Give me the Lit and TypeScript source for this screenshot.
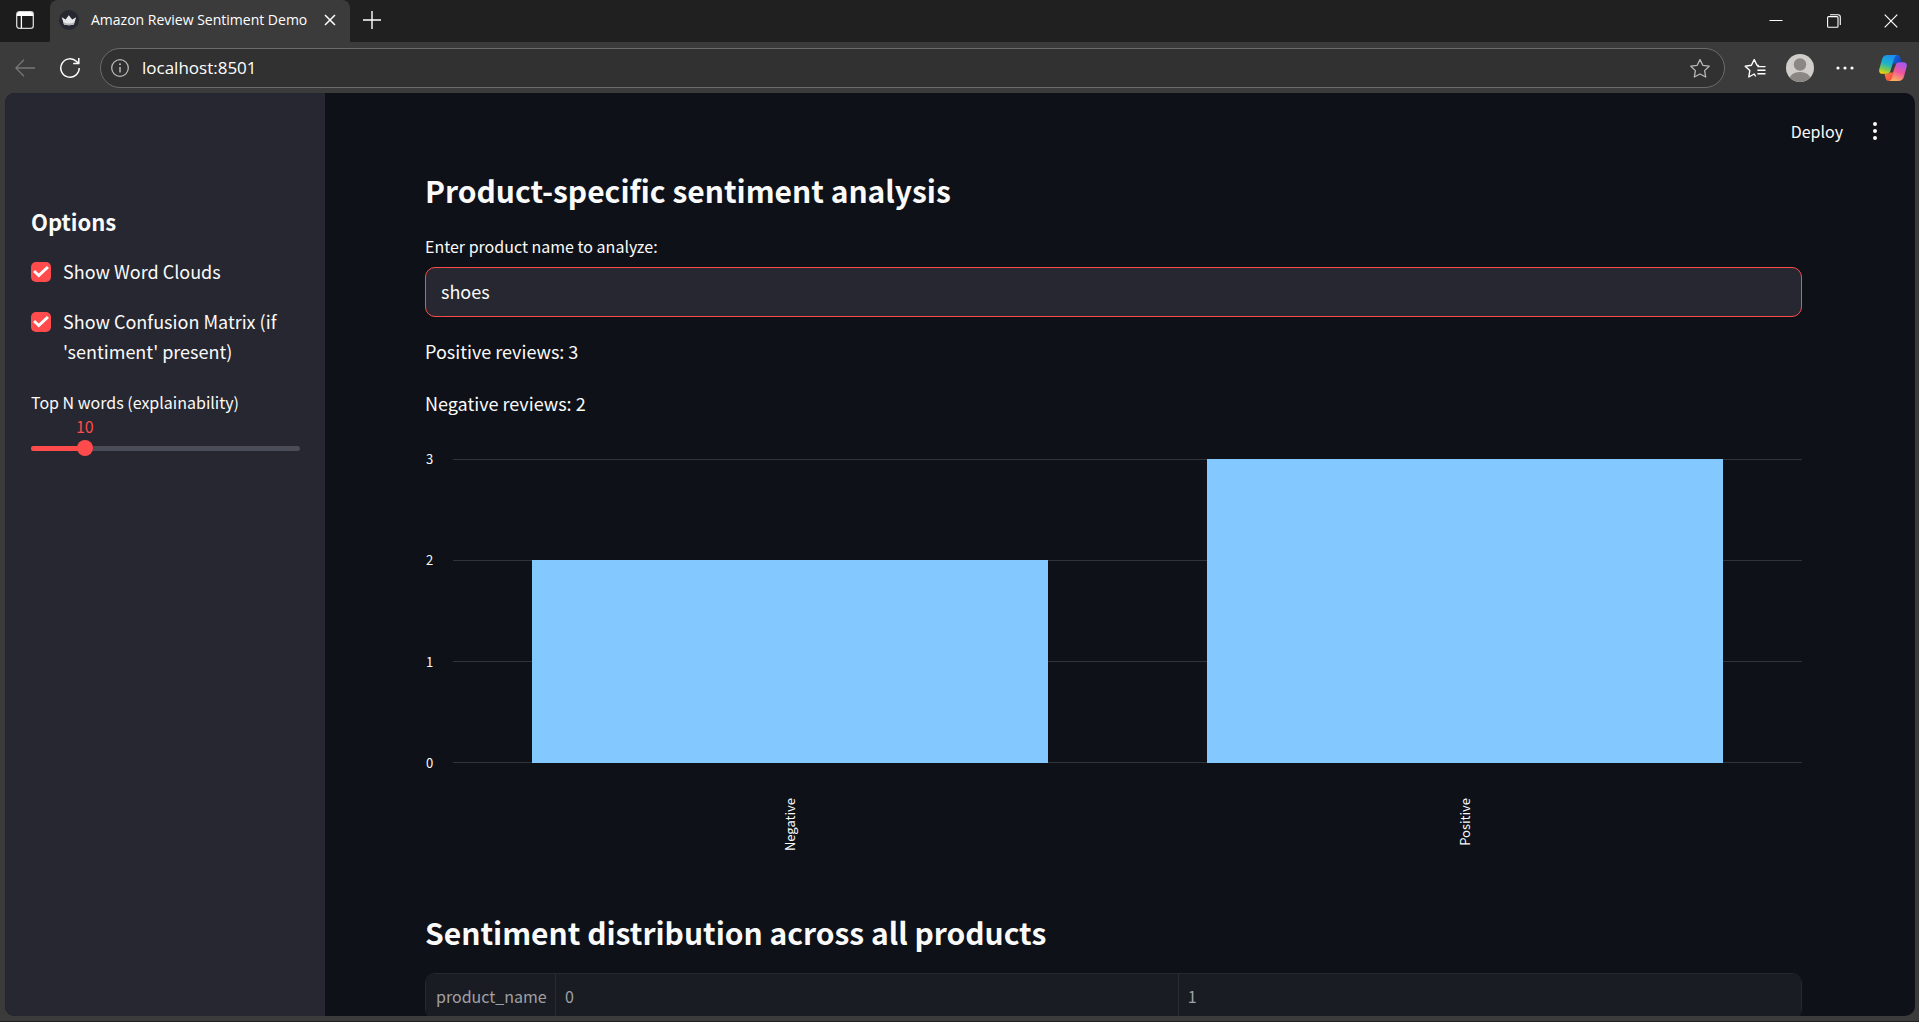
import { LitElement, html, css, svg } from "lit";
import { customElement, property, state } from "lit/decorators.js";

@customElement("browser-bar")
export class BrowserBar extends LitElement {
  @property() title = "Amazon Review Sentiment Demo";
  @property() address = "localhost:8501";

  static styles = css`
    :host {
      display: block;
      font-family: "Open Sans", "Noto Sans", sans-serif;
      color: #fff;
    }
    button {
      display: flex;
      align-items: center;
      justify-content: center;
      padding: 0;
      border: 0;
      background: none;
      color: inherit;
      flex: none;
    }
    svg {
      display: block;
      fill: none;
      stroke: currentColor;
      flex: none;
    }
    .titlebar {
      display: flex;
      align-items: flex-start;
      height: 42px;
      background: #202020;
    }
    .panel {
      width: 50px;
      height: 42px;
      padding-bottom: 2px;
      border-bottom-right-radius: 6px;
      background: #1c1c1c;
    }
    .tabwrap {
      display: flex;
      background: #3b3b3b;
      border-radius: 8px 8px 0 0;
    }
    .tab {
      box-sizing: border-box;
      display: flex;
      align-items: center;
      width: 300px;
      height: 42px;
      padding: 0 10px 2px 9px;
      gap: 12px;
    }
    .tabtitle {
      flex: 1;
      font-size: 14px;
      line-height: 20px;
      white-space: nowrap;
    }
    .tabclose {
      width: 20px;
      height: 20px;
    }
    .plus {
      width: 43px;
      height: 40px;
    }
    .spacer {
      flex: 1;
    }
    .win {
      width: 58px;
      height: 42px;
    }
    .win:last-child {
      width: 56px;
    }
    .toolbar {
      display: flex;
      align-items: center;
      padding: 6px 1px 5px 2px;
      background: #3b3b3b;
    }
    .tool {
      width: 45px;
      height: 40px;
    }
    .back {
      color: #777;
    }
    .address {
      box-sizing: border-box;
      display: flex;
      align-items: center;
      flex: 1;
      height: 40px;
      margin: 0 7px 0 8px;
      padding: 0 13px 0 9px;
      gap: 12px;
      border: 1px solid #6c6c6c;
      border-radius: 20px;
      background: #313131;
      color: #b8b8b8;
    }
    .url {
      flex: 1;
      min-width: 0;
      padding: 0;
      border: 0;
      outline: 0;
      background: none;
      color: #fff;
      font: 17px/24px "Open Sans", "Noto Sans", sans-serif;
    }
    .star {
      width: 22px;
      height: 30px;
    }
    .copilot {
      width: 51px;
      height: 40px;
    }
  `;

  render() {
    return html`
      <div class="titlebar">
        <button class="panel" aria-label="Tab actions">
          <svg width="18" height="18" viewBox="0 0 18 18">
            <rect x="0.7" y="0.7" width="16.6" height="16.6" rx="2.6" stroke-width="1.3" stroke="#d8d8d8" />
            <path d="M1 3.2Q1 1 3.2 1H14.8Q17 1 17 3.2V5H1Z" fill="#fff" stroke="none" />
            <path d="M5.4 5V17" stroke-width="1.3" />
          </svg>
        </button>
        <div class="tabwrap">
          <div class="tab">
            <svg width="20" height="20" viewBox="0 0 20 20">
              <circle cx="10" cy="10" r="10" fill="#262730" stroke="none" />
              <path d="M2.8 7.2 6.6 9.4 9.8 5.2 13.2 9.4 17.2 7.2 14.8 14.4Q9.8 16 5 14.4Z" fill="#e8e8ea" stroke="none" />
              <path d="M4.4 12.2Q10 14.6 15.6 12.2L14.8 14.4Q9.8 16 5 14.4Z" fill="#b5b5ba" stroke="none" />
            </svg>
            <span class="tabtitle">${this.title}</span>
            <button class="tabclose" aria-label="Close tab">
              <svg width="12" height="12" viewBox="0 0 12 12"><path d="M1 1 11 11M11 1 1 11" stroke-width="1.5" /></svg>
            </button>
          </div>
        </div>
        <button class="plus" aria-label="New tab">
          <svg width="18" height="18" viewBox="0 0 18 18"><path d="M9 0V18M0 9H18" stroke-width="1.4" /></svg>
        </button>
        <div class="spacer"></div>
        <button class="win" aria-label="Minimize">
          <svg width="14" height="14" viewBox="0 0 14 14"><path d="M0.5 6.5H13.5" stroke-width="1" /></svg>
        </button>
        <button class="win" aria-label="Restore">
          <svg width="14" height="14" viewBox="0 0 14 14">
            <rect x="0.6" y="2.6" width="10.4" height="10.6" rx="1" stroke-width="1.1" />
            <path d="M3 0.7H11Q13.3 0.7 13.3 3V11" stroke-width="1.1" />
          </svg>
        </button>
        <button class="win" aria-label="Close">
          <svg width="14" height="14" viewBox="0 0 14 14"><path d="M0.7 0.7 13.3 13.3M13.3 0.7 0.7 13.3" stroke-width="1.2" /></svg>
        </button>
      </div>
      <div class="toolbar">
        <button class="tool back" aria-label="Back">
          <svg width="20" height="18" viewBox="0 0 20 18"><path d="M20 9H0.8M9 0.7 0.8 9 9 17.3" stroke-width="1.3" /></svg>
        </button>
        <button class="tool" aria-label="Refresh">
          <svg width="22" height="22" viewBox="0 0 22 22">
            <path d="M20.2 11A9.2 9.2 0 1 1 17.6 4.6L19.4 6.4" stroke-width="1.5" />
            <path d="M19.8 1V6.6H14.2" stroke-width="1.5" />
          </svg>
        </button>
        <div class="address">
          <svg width="20" height="20" viewBox="0 0 20 20">
            <circle cx="10" cy="10" r="8.3" stroke-width="1.3" />
            <path d="M10 9V14.4" stroke-width="1.5" />
            <circle cx="10" cy="6.3" r="1" fill="currentColor" stroke="none" />
          </svg>
          <input class="url" type="text" aria-label="Address" .value=${this.address} />
          <button class="star" aria-label="Add to favorites">
            <svg width="22" height="21" viewBox="0 0 22 21">
              <path d="M11 1.6 13.8 7.3 20.2 8.2 15.6 12.6 16.7 19 11 16 5.3 19 6.4 12.6 1.8 8.2 8.2 7.3Z" stroke-width="1.3" stroke-linejoin="round" />
            </svg>
          </button>
        </div>
        <button class="tool" aria-label="Favorites">
          <svg width="22" height="21" viewBox="0 0 22 21">
            <path d="M11.4 18 10.2 16 4.8 19 5.8 12.6 1.2 8.2 7.4 7.3 10.2 1.6 13 7.3 14.4 7.5" stroke-width="1.4" stroke-linejoin="round" stroke-linecap="round" />
            <path d="M13.4 8.6H21.5M13.4 12.2H21.5M13.4 15.8H21.5" stroke-width="1.4" />
          </svg>
        </button>
        <button class="tool" aria-label="Profile">
          <svg width="28" height="28" viewBox="0 0 28 28">
            <clipPath id="face"><circle cx="14" cy="14" r="14" /></clipPath>
            <g clip-path="url(#face)" stroke="none">
              <rect width="28" height="28" fill="#d0cecb" />
              <circle cx="14" cy="10.5" r="6.2" fill="#8a8785" />
              <ellipse cx="14" cy="25" rx="10.5" ry="7" fill="#8a8785" />
            </g>
          </svg>
        </button>
        <button class="tool" aria-label="More">
          <svg width="18" height="4" viewBox="0 0 18 4">
            <g fill="#fff" stroke="none"><circle cx="2" cy="2" r="1.6" /><circle cx="9" cy="2" r="1.6" /><circle cx="16" cy="2" r="1.6" /></g>
          </svg>
        </button>
        <button class="copilot" aria-label="Copilot">
          <svg width="28" height="26" viewBox="0 0 28 26">
            <defs>
              <linearGradient id="cool" x1="0.5" y1="0" x2="0.2" y2="1">
                <stop offset="0" stop-color="#1b8ff0" /><stop offset="0.45" stop-color="#1db4c8" />
                <stop offset="0.75" stop-color="#7ec850" /><stop offset="1" stop-color="#ffd400" />
              </linearGradient>
              <linearGradient id="warm" x1="0.7" y1="0" x2="0.3" y2="1">
                <stop offset="0" stop-color="#a457f5" /><stop offset="0.5" stop-color="#f0559c" />
                <stop offset="1" stop-color="#ffb45c" />
              </linearGradient>
              <linearGradient id="deep" x1="0" y1="0" x2="1" y2="0.6">
                <stop offset="0" stop-color="#1a6fe0" /><stop offset="1" stop-color="#0f3fc0" />
              </linearGradient>
              <linearGradient id="fire" x1="0" y1="0" x2="1" y2="1">
                <stop offset="0" stop-color="#ff8a3c" /><stop offset="1" stop-color="#ef4048" />
              </linearGradient>
            </defs>
            <g stroke="none">
              <path d="M13 0H18.4Q20.6 0 21.2 2.2L22.6 7.4H19.6Q16.6 7.4 15.6 10L12 14Z" fill="url(#deep)" />
              <path d="M15 26H9.6Q7.4 26 6.8 23.8L5.4 18.4H9Q11.6 18.4 12.6 15.8L16 12Z" fill="url(#fire)" />
              <path d="M8.6 0H18Q15.8 0.6 15 3.4L11.4 16Q10.6 18.8 7.6 18.8H3.6Q-0.8 18.8 0.4 13.8L3 4.4Q4.2 0 8.6 0Z" fill="url(#cool)" />
              <path d="M19.4 26H10.2Q12.4 25.4 13.2 22.6L16.6 10Q17.4 7.2 20.4 7.2H24.2Q28.8 7.2 27.6 12L25 21.6Q23.8 26 19.4 26Z" fill="url(#warm)" />
              <path d="M14 8.5H16.6L14 17.5H11.4Z" fill="#3b3b3b" />
            </g>
          </svg>
        </button>
      </div>
    `;
  }
}

const appFont = css`
  :host {
    font-family: "Noto Sans CJK JP", "Noto Sans", sans-serif;
    color: #fafafa;
  }
`;

@customElement("options-panel")
export class OptionsPanel extends LitElement {
  @state() private topN = 10;
  private min = 5;
  private max = 30;

  static styles = [
    appFont,
    css`
      :host {
        display: block;
        box-sizing: border-box;
        width: 320px;
        padding: 113px 25px 0 26px;
        background: #262730;
      }
      .heading {
        margin: 0 0 20px;
        font-size: 22px;
        line-height: 30px;
        font-weight: 700;
      }
      .check {
        display: flex;
        align-items: flex-start;
        gap: 12px;
        margin-bottom: 20px;
        font-size: 18px;
        line-height: 30px;
      }
      .box {
        appearance: none;
        display: grid;
        place-items: center;
        flex: none;
        width: 20px;
        height: 20px;
        margin: 6px 0 0;
        border-radius: 5px;
        background: #4a4c57;
      }
      .box:checked {
        background: #ff4b4b;
      }
      .box:checked::before {
        content: "";
        width: 16px;
        height: 12px;
        background: #fafafa;
        clip-path: polygon(0 50%, 13% 33%, 36% 62%, 87% 0, 100% 16%, 36% 96%);
      }
      .caption {
        display: block;
        margin-top: 24px;
        font-size: 16px;
        line-height: 24px;
      }
      .value {
        display: flex;
        justify-content: center;
        width: 0;
        color: #ff4b4b;
        font-size: 16px;
        line-height: 24px;
      }
      .slider {
        display: grid;
        align-items: center;
        height: 16px;
        margin-top: 2px;
      }
      .track {
        grid-area: 1 / 1;
        height: 5px;
        border-radius: 4px;
        background: #4a4c57;
        overflow: hidden;
      }
      .filled {
        height: 5px;
        background: #ff4b4b;
      }
      .range {
        grid-area: 1 / 1;
        appearance: none;
        height: 16px;
        margin: 0 -8px;
        background: none;
      }
      .range::-webkit-slider-thumb {
        appearance: none;
        width: 16px;
        height: 16px;
        border-radius: 50%;
        background: #ff4b4b;
      }
    `,
  ];

  render() {
    const pct = ((this.topN - this.min) / (this.max - this.min)) * 100;
    return html`
      <h3 class="heading">Options</h3>
      <label class="check"><input class="box" type="checkbox" checked /><span>Show Word Clouds</span></label>
      <label class="check"><input class="box" type="checkbox" checked /><span>Show Confusion Matrix (if 'sentiment' present)</span></label>
      <label class="caption" for="topn">Top N words (explainability)</label>
      <output class="value" for="topn" style="margin-left:${pct}%">${this.topN}</output>
      <div class="slider">
        <div class="track"><div class="filled" style="width:${pct}%"></div></div>
        <input
          id="topn"
          class="range"
          type="range"
          min=${this.min}
          max=${this.max}
          .value=${String(this.topN)}
          @input=${(e: Event) => (this.topN = Number((e.target as HTMLInputElement).value))}
        />
      </div>
    `;
  }
}

interface Bar {
  label: string;
  value: number;
}

@customElement("bar-chart")
export class BarChart extends LitElement {
  @property({ attribute: false }) bars: Bar[] = [];
  @property({ type: Number }) max = 3;

  static styles = [
    appFont,
    css`
      :host {
        display: grid;
        grid-template-columns: 28px 1fr;
        grid-template-rows: 304px auto;
        font-size: 13px;
        line-height: 18px;
      }
      .axis {
        display: flex;
        flex-direction: column;
        justify-content: space-between;
        margin: -9px 0;
        padding-left: 1px;
      }
      .plot {
        display: grid;
      }
      .lines {
        grid-area: 1 / 1;
        display: flex;
        flex-direction: column;
        justify-content: space-between;
      }
      .line {
        height: 1px;
        background: #31333b;
      }
      .bars {
        grid-area: 1 / 1;
        display: flex;
      }
      .band {
        flex: 1;
        display: flex;
        align-items: flex-end;
        justify-content: center;
      }
      .bar {
        width: 76.5%;
        background: #83c9ff;
      }
      .names {
        grid-column: 2;
        display: flex;
        height: 92px;
        padding-top: 35px;
      }
      .name {
        flex: 1;
        display: flex;
        align-items: flex-start;
        justify-content: center;
      }
      .turned {
        writing-mode: vertical-rl;
        transform: rotate(180deg);
      }
    `,
  ];

  render() {
    const ticks = Array.from({ length: this.max + 1 }, (_, i) => this.max - i);
    return html`
      <div class="axis">${ticks.map((t) => html`<span>${t}</span>`)}</div>
      <div class="plot">
        <div class="lines">${ticks.map(() => html`<div class="line"></div>`)}</div>
        <div class="bars">
          ${this.bars.map(
            (b) => html`<div class="band"><div class="bar" style="height:${(b.value / this.max) * 100}%"></div></div>`
          )}
        </div>
      </div>
      <div class="names">
        ${this.bars.map((b) => html`<div class="name"><span class="turned">${b.label}</span></div>`)}
      </div>
    `;
  }
}

@customElement("app-root")
export class AppRoot extends LitElement {
  private bars: Bar[] = [
    { label: "Negative", value: 2 },
    { label: "Positive", value: 3 },
  ];

  static styles = [
    appFont,
    css`
      :host {
        display: flex;
        flex-direction: column;
        box-sizing: border-box;
        height: 100vh;
        overflow: hidden;
        background: #3b3b3b;
        border-bottom: 1px solid #202020;
      }
      .page {
        display: flex;
        flex: 1;
        min-height: 0;
        margin: 0 4px 5px 5px;
        border-radius: 10px;
        background: #0e1117;
        overflow: hidden;
      }
      .main {
        flex: 1;
        min-width: 0;
        overflow: hidden;
      }
      .header {
        display: flex;
        align-items: center;
        justify-content: flex-end;
        gap: 22px;
        height: 75px;
        padding-right: 30px;
      }
      .action {
        display: flex;
        align-items: center;
        justify-content: center;
        padding: 0;
        border: 0;
        background: none;
        color: #fafafa;
        font: 16px/24px "Noto Sans CJK JP", "Noto Sans", sans-serif;
      }
      .menu {
        width: 20px;
        height: 24px;
      }
      .content {
        padding: 0 113px 0 100px;
      }
      .title {
        margin: 0;
        font-size: 30px;
        line-height: 44px;
        font-weight: 700;
      }
      .label {
        display: block;
        margin: 22px 0 9px;
        font-size: 16px;
        line-height: 24px;
      }
      .field {
        box-sizing: border-box;
        display: block;
        width: 100%;
        height: 50px;
        padding: 0 15px 2px;
        border: 1px solid #ff4b4b;
        border-radius: 10px;
        outline: 0;
        background: #262730;
        color: #fafafa;
        font: 18px/28px "Noto Sans CJK JP", "Noto Sans", sans-serif;
      }
      .readout {
        display: grid;
        gap: 20px;
        margin: 18px 0 40px;
      }
      .text {
        margin: 0;
        font-size: 18px;
        line-height: 32px;
      }
      .chart {
        margin-bottom: 20px;
      }
      .tablebox {
        margin-top: 19px;
        border: 1px solid #26282f;
        border-radius: 10px;
        overflow: hidden;
      }
      .table {
        width: 100%;
        table-layout: fixed;
        border-collapse: collapse;
        background: #1a1c23;
      }
      .cell {
        height: 44px;
        padding: 0 9px;
        border-right: 1px solid #2a2c34;
        color: #a0a1a5;
        font-size: 16px;
        line-height: 24px;
        font-weight: 400;
        text-align: left;
      }
      .cell:first-child {
        width: 110px;
        padding-left: 10px;
      }
      .cell:last-child {
        border-right: 0;
      }
    `,
  ];

  render() {
    return html`
      <browser-bar></browser-bar>
      <div class="page">
        <options-panel></options-panel>
        <main class="main">
          <div class="header">
            <button class="action">Deploy</button>
            <button class="action menu" aria-label="Main menu">
              <svg width="4" height="18" viewBox="0 0 4 18" fill="#fafafa">
                ${[2, 9, 16].map((y) => svg`<circle cx="2" cy=${y} r="2" />`)}
              </svg>
            </button>
          </div>
          <div class="content">
            <h2 class="title">Product-specific sentiment analysis</h2>
            <label class="label" for="product">Enter product name to analyze:</label>
            <input id="product" class="field" type="text" .value=${"shoes"} />
            <div class="readout">
              <p class="text">Positive reviews: 3</p>
              <p class="text">Negative reviews: 2</p>
            </div>
            <bar-chart class="chart" .bars=${this.bars} .max=${3}></bar-chart>
            <h2 class="title">Sentiment distribution across all products</h2>
            <div class="tablebox">
              <table class="table">
                <thead>
                  <tr>
                    <th class="cell">product_name</th>
                    <th class="cell">0</th>
                    <th class="cell">1</th>
                  </tr>
                </thead>
              </table>
            </div>
          </div>
        </main>
      </div>
    `;
  }
}
